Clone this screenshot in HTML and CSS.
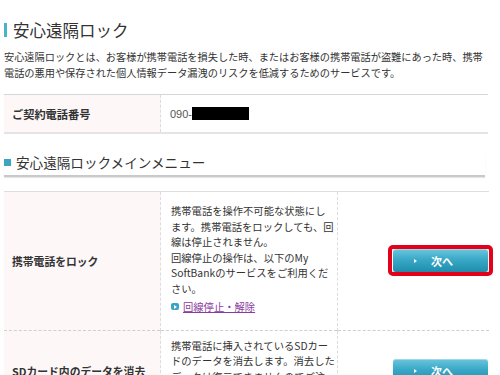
FILE: index.html
```html
<!DOCTYPE html>
<html lang="ja">
<head>
<meta charset="utf-8">
<title>安心遠隔ロック</title>
<link rel="stylesheet" href="styles.css">
</head>
<body>
<div class="page">
  <h1 class="title">安心遠隔ロック</h1>
  <p class="desc">安心遠隔ロックとは、お客様が携帯電話を損失した時、またはお客様の携帯電話が盗難にあった時、携帯<br>電話の悪用や保存された個人情報データ漏洩のリスクを低減するためのサービスです。</p>

  <table class="info">
    <tr>
      <th>ご契約電話番号</th>
      <td>090-<span class="mask"></span></td>
    </tr>
  </table>

  <h2 class="sub">安心遠隔ロックメインメニュー</h2>

  <table class="menu">
    <tr>
      <th>携帯電話をロック</th>
      <td class="detail">
        <p class="lines">携帯電話を操作不可能な状態にし<br>ます。携帯電話をロックしても、回<br>線は停止されません。<br>回線停止の操作は、以下のMy<br>SoftBankのサービスをご利用くだ<br>さい。</p>
        <p class="link"><span class="link-icon"></span><a href="#">回線停止・解除</a></p>
      </td>
      <td class="action">
        <span class="btn-wrap">
          <a class="btn" href="#"><span class="arrow"></span>次へ</a>
          <span class="highlight"></span>
        </span>
      </td>
    </tr>
    <tr class="second">
      <th>SDカード内のデータを消去</th>
      <td class="detail">
        <p class="lines">携帯電話に挿入されているSDカー<br>ドのデータを消去します。消去した<br>データは復元できませんのでご注<br>意ください。</p>
      </td>
      <td class="action">
        <span class="btn-wrap">
          <a class="btn" href="#"><span class="arrow"></span>次へ</a>
        </span>
      </td>
    </tr>
  </table>
</div>
</body>
</html>
```
FILE: styles.css
```css
html, body {
  margin: 0;
  padding: 0;
  background: #ffffff;
}
body {
  height: 375px;
  overflow: hidden;
  font-family: "Noto Sans CJK JP", "Noto Sans", "DejaVu Sans", sans-serif;
  color: #333333;
}
.page {
  width: 486px;
  margin-left: 4px;
}
.title {
  display: flex;
  align-items: center;
  gap: 6px;
  margin: 20px 0 0;
  font-size: 16.5px;
  line-height: 20px;
  font-weight: normal;
  color: #333;
}
.title::before {
  content: "";
  width: 3px;
  height: 14px;
  background: #4bb2c8;
}
.desc {
  margin: 9px 0 0;
  font-size: 10.2px;
  line-height: 16px;
  white-space: nowrap;
  color: #333;
}
.info {
  width: 484px;
  margin-top: 13px;
  border-collapse: collapse;
  table-layout: fixed;
  border-top: 1px solid #d6d6d6;
  border-bottom: 2px solid #e4e4e4;
}
.info th {
  width: 148px;
  height: 37px;
  padding: 0 0 0 8px;
  text-align: left;
  background: #fdf7f8;
  font-size: 11.2px;
  font-weight: bold;
  border-right: 1px dashed #dcdcdc;
}
.info td {
  padding: 0 0 0 9px;
  font-family: "Liberation Sans", "Noto Sans CJK JP", sans-serif;
  font-size: 11px;
  color: #555;
}
.mask {
  display: inline-block;
  width: 57px;
  height: 13px;
  background: #000;
  vertical-align: -2px;
}
.sub {
  display: flex;
  align-items: center;
  gap: 5px;
  width: 481px;
  margin: 19px 0 0;
  padding-bottom: 4px;
  font-size: 13.6px;
  line-height: 18px;
  font-weight: normal;
  color: #333;
  border-bottom: 2px solid #c9c9c9;
  box-shadow: 0 1px 1px #e6e6e6;
}
.sub::before {
  content: "";
  width: 7px;
  height: 7px;
  background: #3aa6c0;
}
.menu {
  width: 484px;
  margin-top: 14px;
  border-collapse: collapse;
  table-layout: fixed;
  border-top: 1px solid #dedede;
}
.menu tr {
  border-bottom: 1px dashed #cfcfcf;
}
.menu th {
  width: 148px;
  padding: 0 0 0 8px;
  text-align: left;
  vertical-align: middle;
  background: #fdf7f8;
  font-size: 10.8px;
  font-weight: bold;
}
.menu .detail {
  width: 156px;
  padding: 11px 10px 15px 10px;
  vertical-align: top;
  border-left: 1px dashed #dcdcdc;
  border-right: 1px dashed #dcdcdc;
}
.menu .second .detail {
  padding-top: 7px;
  padding-bottom: 11px;
}
.lines {
  margin: 0;
  font-size: 10.3px;
  line-height: 15.6px;
  white-space: nowrap;
  color: #333;
}
.link {
  display: flex;
  align-items: center;
  gap: 4px;
  margin: 2.4px 0 0;
  font-size: 10.3px;
  line-height: 15.6px;
}
.link-icon {
  position: relative;
  width: 8px;
  height: 7px;
  border-radius: 2px;
  background: #3ba4c4;
}
.link-icon::after {
  content: "";
  position: absolute;
  left: 3px;
  top: 1.5px;
  border-left: 3px solid #fff;
  border-top: 2px solid transparent;
  border-bottom: 2px solid transparent;
}
.link a {
  color: #8b3a9e;
  text-decoration: underline;
}
.menu .action {
  width: 150px;
  padding: 0 1px 3px 0;
  text-align: right;
  vertical-align: middle;
}
.btn-wrap {
  position: relative;
  display: inline-block;
  vertical-align: middle;
}
.btn {
  display: flex;
  align-items: center;
  gap: 14px;
  box-sizing: border-box;
  width: 95px;
  height: 23px;
  padding-left: 21px;
  border-radius: 3px;
  background: linear-gradient(#6cc6dd 0%, #3aa9c8 45%, #1f8cab 100%);
  box-shadow: inset 0 1px 0 rgba(255,255,255,0.35), 0 1px 1px rgba(0,0,0,0.25);
  color: #ffffff;
  font-size: 11px;
  font-weight: bold;
  text-decoration: none;
}
.arrow {
  width: 0;
  height: 0;
  border-left: 3px solid #fff;
  border-top: 2.5px solid transparent;
  border-bottom: 2.5px solid transparent;
}
.highlight {
  position: absolute;
  top: -4px;
  bottom: -4px;
  left: -5px;
  right: -5px;
  border: 4px solid #e3001b;
  border-radius: 5px;
}
```
